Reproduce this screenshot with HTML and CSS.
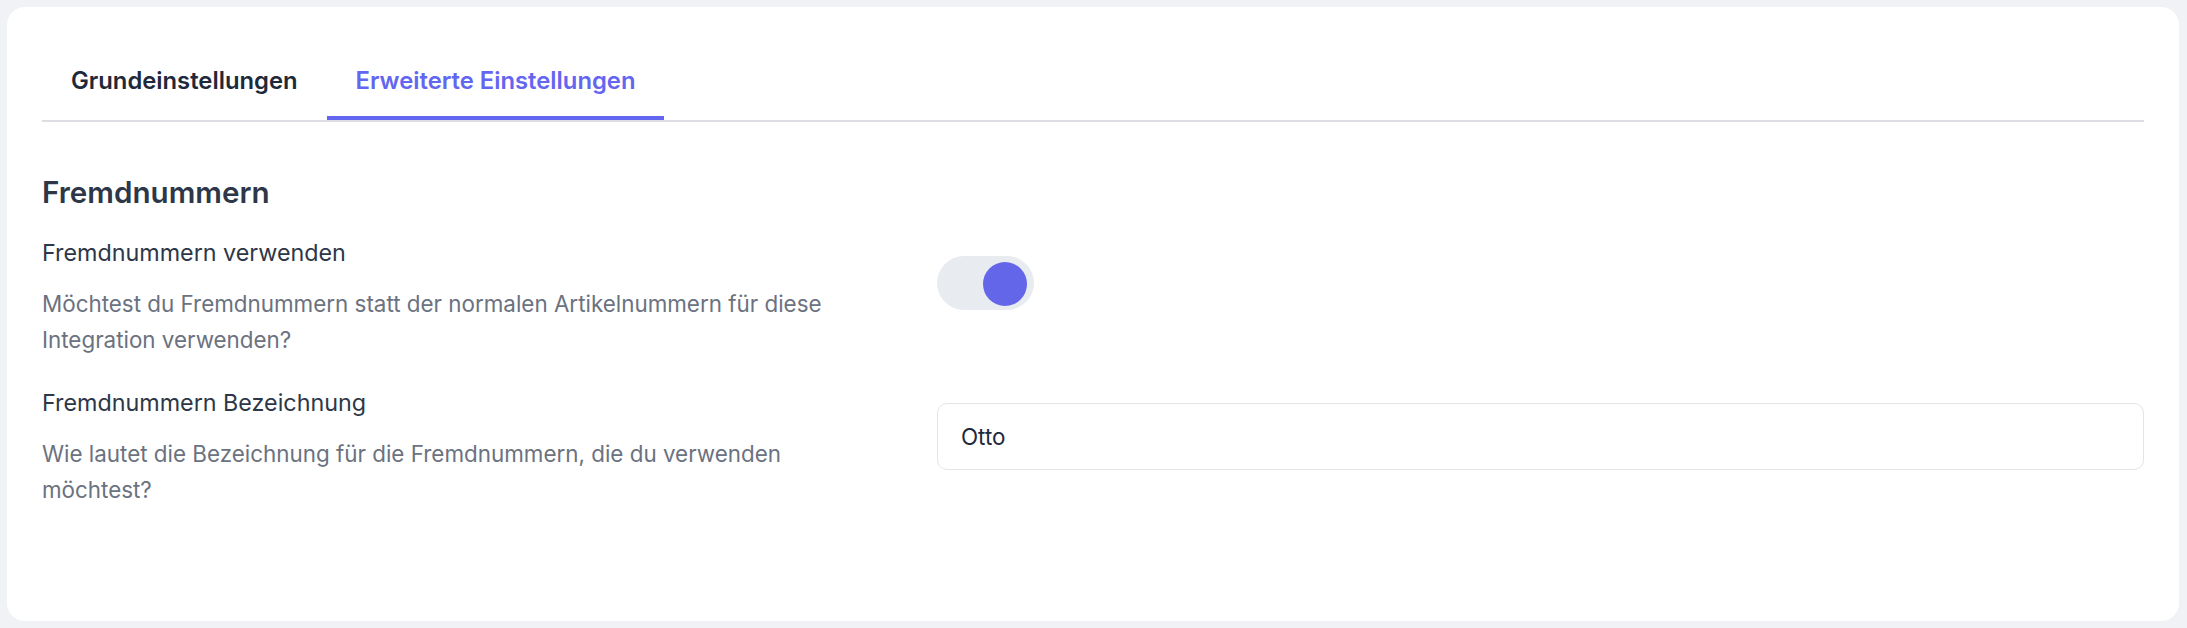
FILE: index.html
```html
<!DOCTYPE html>
<html lang="de">
<head>
<meta charset="utf-8">
<title>Einstellungen</title>
<link rel="stylesheet" href="styles.css">
</head>
<body>
<div class="card">
  <nav class="tabs">
    <button class="tab">Grundeinstellungen</button>
    <button class="tab tab-active">Erweiterte Einstellungen</button>
  </nav>
  <section class="section">
    <h2 class="section-title">Fremdnummern</h2>
    <div class="row">
      <div class="row-text">
        <div class="label">Fremdnummern verwenden</div>
        <p class="desc">Möchtest du Fremdnummern statt der normalen Artikelnummern für diese Integration verwenden?</p>
      </div>
      <div class="row-control">
        <span class="toggle toggle-on"><span class="knob"></span></span>
      </div>
    </div>
    <div class="row">
      <div class="row-text">
        <div class="label">Fremdnummern Bezeichnung</div>
        <p class="desc">Wie lautet die Bezeichnung für die Fremdnummern, die du verwenden möchtest?</p>
      </div>
      <div class="row-control control-input">
        <input class="text-input" type="text" value="Otto">
      </div>
    </div>
  </section>
</div>
</body>
</html>
```

FILE: styles.css
```css
* { box-sizing: border-box; }

html, body {
  margin: 0;
  padding: 0;
}

body {
  background: #f1f2f6;
  font-family: Inter, "Noto Sans", "Liberation Sans", sans-serif;
  padding: 7px 8px 7px 7px;
  overflow: hidden;
}

.card {
  background: #ffffff;
  border-radius: 18px;
  padding: 39px 35px 0 35px;
  height: 614px;
}

.tabs {
  display: flex;
  border-bottom: 2px solid #dcdee3;
}

.tab {
  font-family: inherit;
  background: none;
  border: none;
  border-bottom: 4px solid transparent;
  padding: 19px 29px;
  margin: 0;
  font-size: 23.8px;
  line-height: 32px;
  font-weight: 600;
  color: #1e293b;
  cursor: pointer;
}

.tab-active {
  color: #6366f1;
  border-bottom-color: #6366f1;
}

.section {
  padding-top: 52px;
}

.section-title {
  margin: 0 0 27px 0;
  font-size: 29.6px;
  line-height: 36px;
  font-weight: 600;
  color: #2d3748;
}

.row {
  display: grid;
  grid-template-columns: 830px 1fr;
  column-gap: 65px;
  margin-bottom: 29px;
}

.label {
  font-size: 23.3px;
  line-height: 32px;
  font-weight: 400;
  color: #2d3748;
}

.desc {
  margin: 17px 0 0 0;
  font-size: 22.4px;
  line-height: 36px;
  color: #6b7280;
}

.row-control {
  padding-top: 19px;
}

.control-input {
  padding-top: 16px;
}

.toggle {
  display: block;
  position: relative;
  width: 97px;
  height: 54px;
  border-radius: 27px;
  background: #e8ebf0;
}

.knob {
  position: absolute;
  top: 6px;
  left: 46px;
  width: 44px;
  height: 44px;
  border-radius: 50%;
  background: #6366e8;
}

.text-input {
  display: block;
  width: 100%;
  height: 67px;
  border: 1.5px solid #e3e5ea;
  border-radius: 10px;
  padding: 0 23px;
  font-family: inherit;
  font-size: 22.4px;
  color: #1e293b;
  background: #ffffff;
  outline: none;
}
```
